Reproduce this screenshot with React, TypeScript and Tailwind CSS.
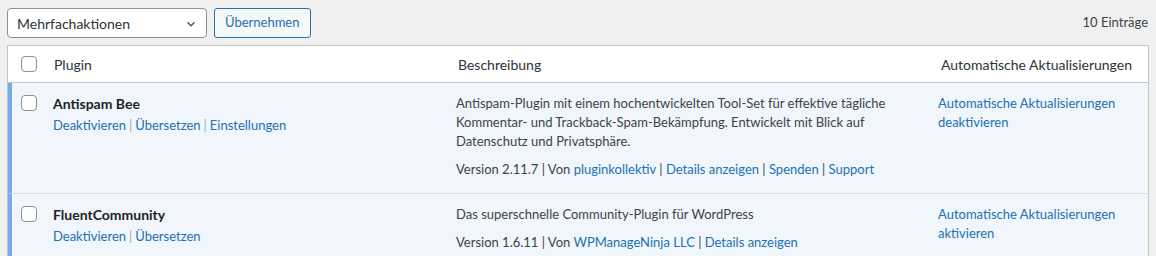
import React from 'react';

const font = { fontFamily: 'Lato, "Noto Sans", sans-serif' };

interface Plugin {
    name: string;
    actions: string[];
    description: string[];
    version: string;
    author: string;
    links: string[];
    autoUpdate: string;
}

const plugins: Plugin[] = [
    {
        name: 'Antispam Bee',
        actions: ['Deaktivieren', 'Übersetzen', 'Einstellungen'],
        description: [
            'Antispam-Plugin mit einem hochentwickelten Tool-Set für effektive tägliche Kommentar- und Trackback-Spam-Bekämpfung. Entwickelt mit Blick auf Datenschutz und Privatsphäre.'
        ],
        version: '2.11.7',
        author: 'pluginkollektiv',
        links: ['Details anzeigen', 'Spenden', 'Support'],
        autoUpdate: 'Automatische Aktualisierungen deaktivieren'
    },
    {
        name: 'FluentCommunity',
        actions: ['Deaktivieren', 'Übersetzen'],
        description: ['Das superschnelle Community-Plugin für WordPress'],
        version: '1.6.11',
        author: 'WPManageNinja LLC',
        links: ['Details anzeigen'],
        autoUpdate: 'Automatische Aktualisierungen aktivieren'
    }
];

const Checkbox = () => (
    <span className="block w-4 h-4 rounded-[4px] border border-[#8c8f94] bg-white" />
);

const PluginRow = ({ plugin }: { plugin: Plugin }) => (
    <div className="grid grid-cols-[32px_402px_482px_1fr] bg-[#f0f6fc] border-l-4 border-[#72aee6] border-b border-b-[#dcdcde] text-[13px] leading-[19px] text-[#3c434a]">
        <div className="pt-[12px] pl-[9px]">
            <Checkbox />
        </div>
        <div className="pt-[11px] pl-[9px]">
            <div className="text-[14px] font-bold text-[#1d2327]">{plugin.name}</div>
            <div className="mt-[3px] text-[#2271b1]">
                {plugin.actions.map((a, i) => (
                    <span key={a}>
                        {i > 0 && <span className="text-[#a7aaad] mx-[3px]">|</span>}
                        {a}
                    </span>
                ))}
            </div>
        </div>
        <div className="pt-[11px] pl-[10px] pr-[28px] pb-[14px]">
            <p>{plugin.description}</p>
            <div className="mt-[9px]">
                Version {plugin.version} | Von{' '}
                <span className="text-[#2271b1]">{plugin.author}</span>
                {plugin.links.map((l) => (
                    <span key={l}>
                        {' '}| <span className="text-[#2271b1]">{l}</span>
                    </span>
                ))}
            </div>
        </div>
        <div className="pt-[11px] pl-[10px] pr-[20px] text-[#2271b1]">{plugin.autoUpdate}</div>
    </div>
);

export default function App() {
    return (
        <div className="min-h-[256px] bg-[#f0f0f1] px-[7px] pt-[8px]" style={font}>
            <div className="flex items-center gap-[7px]">
                <div className="relative w-[200px] h-[30px] rounded-[4px] border border-[#8c8f94] bg-white flex items-center pl-[9px] text-[14px] text-[#2c3338]">
                    Mehrfachaktionen
                    <svg className="absolute right-[8px] top-[8px]" width="14" height="14" viewBox="0 0 20 20" fill="none" stroke="#50575e" strokeWidth="2">
                        <path d="M5 7.5l5 5 5-5" />
                    </svg>
                </div>
                <button className="h-[30px] px-[10px] rounded-[3px] border border-[#2271b1] bg-[#f6f7f7] text-[13px] text-[#2271b1]">
                    Übernehmen
                </button>
                <div className="ml-auto pr-[1px] text-[13px] text-[#3c434a]">10 Einträge</div>
            </div>
            <div className="mt-[7px] border border-[#c3c4c7] bg-white">
                <div className="grid grid-cols-[40px_398px_482px_1fr] h-[37px] items-center border-b border-[#c3c4c7] text-[14px] text-[#2c3338]">
                    <div className="pl-[13px]">
                        <Checkbox />
                    </div>
                    <div className="pl-[6px]">Plugin</div>
                    <div className="pl-[12px]">Beschreibung</div>
                    <div className="pr-[16px] text-right">Automatische Aktualisierungen</div>
                </div>
                {plugins.map((p) => (
                    <PluginRow key={p.name} plugin={p} />
                ))}
            </div>
        </div>
    );
}
